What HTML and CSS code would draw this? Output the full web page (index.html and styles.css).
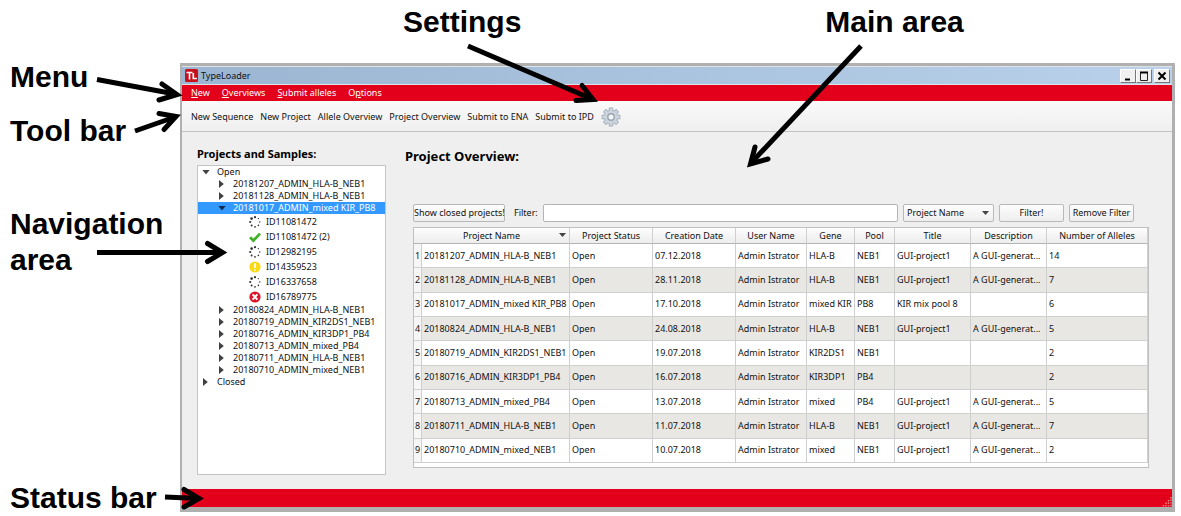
FILE: index.html
```html
<!DOCTYPE html>
<html lang="en">
<head>
<meta charset="utf-8">
<title>TypeLoader</title>
<link rel="stylesheet" href="styles.css">
</head>
<body>
<svg class="defs" aria-hidden="true">
  <symbol id="busy" viewBox="0 0 12 12">
    <g fill="#333">
      <circle cx="6" cy="1.2" r="1.1"/><circle cx="2.6" cy="2.6" r="1.3"/><circle cx="1.2" cy="6" r="1.1"/>
      <circle cx="2.6" cy="9.4" r="1"/><circle cx="6" cy="10.8" r=".9"/><circle cx="9.4" cy="9.4" r=".8"/>
      <circle cx="10.8" cy="6" r=".7"/><circle cx="9.4" cy="2.6" r=".7"/>
    </g>
  </symbol>
  <symbol id="done" viewBox="0 0 12 12"><path d="M1 6.2 4.4 9.6 11 2.6" fill="none" stroke="#43b02a" stroke-width="2.8"/></symbol>
  <symbol id="warn" viewBox="0 0 12 12"><circle cx="6" cy="6" r="5.6" fill="#fbd913"/><path d="M6 2.2V7M6 8.2V9.8" stroke="#fff" stroke-width="1.7"/></symbol>
  <symbol id="fail" viewBox="0 0 12 12"><circle cx="6" cy="6" r="5.6" fill="#dc1428"/><path d="M3.6 3.4 8.4 8.6M8.4 3.4 3.6 8.6" stroke="#fff" stroke-width="2"/></symbol>
</svg>

<header class="top-labels">
  <span class="label label-settings">Settings</span>
  <span class="label label-main">Main area</span>
</header>
<aside class="side-labels">
  <span class="label label-menu">Menu</span>
  <span class="label label-toolbar">Tool bar</span>
  <span class="label label-nav">Navigation<br>area</span>
  <span class="label label-status">Status bar</span>
</aside>

<div class="window">
  <div class="titlebar">
    <svg class="logo" viewBox="0 0 13 13"><rect width="13" height="13" rx="1.5" fill="#c8101c"/><path d="M1.5 3.5H7.5M4.5 3.5V10.5M8.3 4V9.5H11.8" fill="none" stroke="#fff" stroke-width="1.6"/></svg>
    <span class="title">TypeLoader</span>
    <div class="controls">
      <button class="control" aria-label="Minimize"><svg viewBox="0 0 10 10"><path d="M2 8.5H7" stroke="#000" stroke-width="2"/></svg></button>
      <button class="control" aria-label="Maximize"><svg viewBox="0 0 10 10"><path d="M1.5 1V9.5H8.5V1" fill="none" stroke="#222"/><path d="M1 1.5H9" stroke="#000" stroke-width="2"/></svg></button>
      <button class="control control-close" aria-label="Close"><svg viewBox="0 0 10 10"><path d="M1.5 1.5 8.5 8.5M8.5 1.5 1.5 8.5" stroke="#000" stroke-width="2"/></svg></button>
    </div>
  </div>
  <nav class="menubar">
    <button><u>N</u>ew</button>
    <button><u>O</u>verviews</button>
    <button><u>S</u>ubmit alleles</button>
    <button>O<u>p</u>tions</button>
  </nav>
  <div class="toolbar">
    <button>New Sequence</button>
    <button>New Project</button>
    <button>Allele Overview</button>
    <button>Project Overview</button>
    <button>Submit to ENA</button>
    <button>Submit to IPD</button>
    <button class="gear" aria-label="Settings">
      <svg viewBox="0 0 20 20">
        <g stroke="#a4b0bd" stroke-width="4.4"><path d="M10 .6V19.4M.6 10H19.4M3.4 3.4 16.6 16.6M16.6 3.4 3.4 16.6"/></g>
        <circle cx="10" cy="10" r="7.2" fill="#a4b0bd"/>
        <g stroke="#cfd7df" stroke-width="2.6"><path d="M10 1.4V18.6M1.4 10H18.6M4 4 16 16M16 4 4 16"/></g>
        <circle cx="10" cy="10" r="6.3" fill="#cbd4dd"/>
        <circle cx="10" cy="10" r="3.2" fill="#f4f4f4" stroke="#98a5b3" stroke-width="1.4"/>
      </svg>
    </button>
  </div>

  <div class="content">
    <section class="navigation">
      <h2>Projects and Samples:</h2>
      <ul class="tree">
        <li><div class="node expanded">Open</div>
          <ul>
            <li><div class="node">20181207_ADMIN_HLA-B_NEB1</div></li>
            <li><div class="node">20181128_ADMIN_HLA-B_NEB1</div></li>
            <li><div class="node expanded selected">20181017_ADMIN_mixed KIR_PB8</div>
              <ul class="samples">
                <li><svg><use href="#busy"/></svg>ID11081472</li>
                <li><svg><use href="#done"/></svg>ID11081472 (2)</li>
                <li><svg><use href="#busy"/></svg>ID12982195</li>
                <li><svg><use href="#warn"/></svg>ID14359523</li>
                <li><svg><use href="#busy"/></svg>ID16337658</li>
                <li><svg><use href="#fail"/></svg>ID16789775</li>
              </ul>
            </li>
            <li><div class="node">20180824_ADMIN_HLA-B_NEB1</div></li>
            <li><div class="node">20180719_ADMIN_KIR2DS1_NEB1</div></li>
            <li><div class="node">20180716_ADMIN_KIR3DP1_PB4</div></li>
            <li><div class="node">20180713_ADMIN_mixed_PB4</div></li>
            <li><div class="node">20180711_ADMIN_HLA-B_NEB1</div></li>
            <li><div class="node">20180710_ADMIN_mixed_NEB1</div></li>
          </ul>
        </li>
        <li><div class="node">Closed</div></li>
      </ul>
    </section>

    <main class="overview">
      <h1>Project Overview:</h1>
      <div class="filters">
        <button class="btn btn-show">Show closed projects!</button>
        <label for="filter">Filter:</label>
        <input id="filter" type="text">
        <div class="picker">
          <select class="btn" aria-label="Filter column"><option>Project Name</option></select>
        </div>
        <button class="btn btn-filter">Filter!</button>
        <button class="btn btn-filter">Remove Filter</button>
      </div>
      <div class="table-frame">
        <table>
          <colgroup><col class="c-num"><col class="c-name"><col class="c-wide"><col class="c-wide"><col class="c-user"><col class="c-gene"><col class="c-pool"><col class="c-text"><col class="c-text"><col></colgroup>
          <thead><tr><th class="sorted" colspan="2">Project Name</th><th>Project Status</th><th>Creation Date</th><th>User Name</th><th>Gene</th><th>Pool</th><th>Title</th><th>Description</th><th>Number of Alleles</th></tr></thead>
          <tbody>
            <tr><th>1</th><td>20181207_ADMIN_HLA-B_NEB1</td><td>Open</td><td>07.12.2018</td><td>Admin Istrator</td><td>HLA-B</td><td>NEB1</td><td>GUI-project1</td><td>A GUI-generat...</td><td>14</td></tr>
            <tr><th>2</th><td>20181128_ADMIN_HLA-B_NEB1</td><td>Open</td><td>28.11.2018</td><td>Admin Istrator</td><td>HLA-B</td><td>NEB1</td><td>GUI-project1</td><td>A GUI-generat...</td><td>7</td></tr>
            <tr><th>3</th><td>20181017_ADMIN_mixed KIR_PB8</td><td>Open</td><td>17.10.2018</td><td>Admin Istrator</td><td>mixed KIR</td><td>PB8</td><td>KIR mix pool 8</td><td></td><td>6</td></tr>
            <tr><th>4</th><td>20180824_ADMIN_HLA-B_NEB1</td><td>Open</td><td>24.08.2018</td><td>Admin Istrator</td><td>HLA-B</td><td>NEB1</td><td>GUI-project1</td><td>A GUI-generat...</td><td>5</td></tr>
            <tr><th>5</th><td>20180719_ADMIN_KIR2DS1_NEB1</td><td>Open</td><td>19.07.2018</td><td>Admin Istrator</td><td>KIR2DS1</td><td>NEB1</td><td></td><td></td><td>2</td></tr>
            <tr><th>6</th><td>20180716_ADMIN_KIR3DP1_PB4</td><td>Open</td><td>16.07.2018</td><td>Admin Istrator</td><td>KIR3DP1</td><td>PB4</td><td></td><td></td><td>2</td></tr>
            <tr><th>7</th><td>20180713_ADMIN_mixed_PB4</td><td>Open</td><td>13.07.2018</td><td>Admin Istrator</td><td>mixed</td><td>PB4</td><td>GUI-project1</td><td>A GUI-generat...</td><td>5</td></tr>
            <tr><th>8</th><td>20180711_ADMIN_HLA-B_NEB1</td><td>Open</td><td>11.07.2018</td><td>Admin Istrator</td><td>HLA-B</td><td>NEB1</td><td>GUI-project1</td><td>A GUI-generat...</td><td>7</td></tr>
            <tr><th>9</th><td>20180710_ADMIN_mixed_NEB1</td><td>Open</td><td>10.07.2018</td><td>Admin Istrator</td><td>mixed</td><td>NEB1</td><td>GUI-project1</td><td>A GUI-generat...</td><td>2</td></tr>
          </tbody>
        </table>
      </div>
    </main>
  </div>
  <footer class="statusbar">
    <svg class="grip" viewBox="0 0 10 10"><path d="M9 0V10M6.5 3V10M4 5.5V10M1.5 8V10" stroke="#e88" stroke-width="1.4" stroke-dasharray="1.4 1.2"/></svg>
  </footer>
</div>

<svg class="arrows" aria-hidden="true">
  <g fill="none" stroke="#000" stroke-width="5" stroke-linecap="round" stroke-miterlimit="8">
    <g stroke-linecap="butt">
      <path d="M97 79.500 175 94M135 131 175 117M468 46 592 99M861 46 751 163M97 252.500H223M165 497 199 498.500"/>
    </g>
    <path d="M162 84 177 94.500 159 100"/>
    <path d="M159 113.500 176 116.500 164 129.500"/>
    <path d="M582 85.500 593 99.500 576 100.500"/>
    <path d="M755 147 750.500 164 768 159"/>
    <path d="M207.500 243.500 222.500 252.500 207.500 261.500"/>
    <path d="M184 489.500 199 498.500 184 507"/>
  </g>
</svg>
</body>
</html>
```
FILE: styles.css
```css
* { box-sizing: border-box; }

body {
  margin: 0;
  position: relative;
  min-height: 100vh;
  display: grid;
  grid-template-columns: 180px minmax(0, 1fr);
  grid-template-rows: 63px 1fr;
  background: #fff;
  color: #111;
  font: 9px/12px "Noto Sans", "Open Sans", sans-serif;
}

button, input, select { font: inherit; color: inherit; }
button { padding: 0; border: 0; background: none; white-space: nowrap; }
ul { margin: 0; padding: 0; list-style: none; }
h1, h2 { margin: 0; color: #000; }
.defs { position: absolute; width: 0; height: 0; }

/* Callouts */
.label { font: bold 30px/36px "Liberation Sans", Arial, sans-serif; color: #000; white-space: nowrap; }
.top-labels { grid-column: 2; display: flex; gap: 304px; padding: 4px 0 0 223px; }
.side-labels { grid-column: 1; grid-row: 1 / 3; display: flex; flex-direction: column; padding: 59px 0 0 10px; }
.label-toolbar { margin-top: 18px; }
.label-nav { margin-top: 57px; }
.label-status { margin-top: auto; }
.arrows { position: absolute; top: 0; left: 0; width: 100%; height: 100%; pointer-events: none; }

/* Window */
.window {
  grid-column: 2;
  grid-row: 2;
  display: flex;
  flex-direction: column;
  margin: 0 6px 4px 0;
  border: solid #b0b0b0;
  border-width: 3px 3px 5px 2px;
  background: #efefef;
}
.titlebar {
  display: flex;
  align-items: center;
  height: 19px;
  padding: 0 2px 0 3px;
  border: solid #dfe3e6;
  border-width: 1px 0;
  background: linear-gradient(90deg, #9bb5d2, #b9d1ea);
}
.logo { width: 13px; height: 13px; }
.title { margin-left: 3px; }
.controls { display: flex; margin-left: auto; }
.control {
  width: 16px;
  height: 14px;
  display: grid;
  place-items: center;
  background: #f0f0f0;
  border: solid 1px;
  border-color: #fff #777 #777 #fff;
}
.control svg { width: 10px; height: 10px; }
.control-close { margin-left: 2px; }

.menubar { display: flex; gap: 12px; height: 16px; padding: 0 9px; background: #e2001a; color: #fff; }
.toolbar {
  display: flex;
  align-items: center;
  gap: 7px;
  height: 31px;
  padding: 2px 9px 0;
  border-bottom: 1px solid #c3c3c3;
  background: linear-gradient(#fafafa, #efefef);
}
.gear { width: 20px; height: 20px; }
.gear svg { display: block; width: 20px; height: 20px; }

.content { flex: 1; display: flex; gap: 19px; padding: 15px 23px 14px 15px; }

/* Tree */
.navigation { flex: 0 0 189px; display: flex; flex-direction: column; gap: 4px; }
.navigation h2 { font-size: 11px; line-height: 14px; }
.tree { flex: 1; border: 1px solid #c4c4c4; background: #fff; }
.node { display: flex; align-items: center; height: 12px; padding-left: 4px; white-space: nowrap; }
.tree > li > ul .node { padding-left: 20px; }
.node::before {
  content: "";
  width: 6px;
  height: 8px;
  margin: 0 8px 0 1px;
  background: #404040;
  clip-path: polygon(0 0, 80% 50%, 0 100%);
}
.node.expanded::before { width: 8px; height: 5px; margin: 0 7px 0 0; clip-path: polygon(0 0, 100% 0, 50% 100%); }
.node.selected { background: #3399ff; color: #fff; }
.node.selected::before { background: #102a50; }
.samples li { display: flex; align-items: center; gap: 5px; height: 15px; padding-left: 51px; white-space: nowrap; }
.samples svg { width: 12px; height: 12px; }

/* Overview */
.overview { flex: 1; min-width: 0; display: flex; flex-direction: column; padding-bottom: 7px; }
.overview h1 { font-size: 13px; line-height: 18px; }
.filters { display: flex; align-items: center; gap: 5px; margin: 39px 15px 5px 8px; }
.filters label { margin: 0 0 0 4px; }
.filters input { flex: 1; min-width: 0; height: 18px; border: 1px solid #b4b4b4; border-radius: 2px; background: #fff; }
.btn {
  height: 18px;
  border: 1px solid #b8b8b8;
  border-radius: 2px;
  background: linear-gradient(#fdfdfd, #eee);
}
.btn-show { width: 92px; }
.btn-filter { width: 65px; }
.picker { position: relative; display: flex; width: 91px; }
.picker .btn { width: 100%; padding: 0 3px; appearance: none; }

.table-frame { flex: 1; margin-left: 8px; padding-bottom: 4px; border: 1px solid #c0c0c0; background: #fff; }
table { width: 100%; height: 100%; table-layout: fixed; border-collapse: separate; border-spacing: 0; }
th, td { padding: 0; border: solid #cfcfcf; border-width: 0 1px 1px 0; white-space: nowrap; overflow: hidden; }
td { padding-left: 2px; text-align: left; }
th { font-weight: normal; background: #f6f6f6; }
thead th { position: relative; height: 16px; background: linear-gradient(#fdfdfd, #ededed); border-bottom-color: #b4b4b4; }
tbody tr:nth-child(even) td { background: #e9e7e3; }
.c-num { width: 8px; }
.c-name { width: 148px; }
.c-wide { width: 83px; }
.c-user { width: 71px; }
.c-gene { width: 48px; }
.c-pool { width: 40px; }
.c-text { width: 76px; }
.sorted::after,
.picker::after {
  content: "";
  position: absolute;
  top: 5px;
  right: 3px;
  width: 7px;
  height: 4px;
  background: #444;
  clip-path: polygon(0 0, 100% 0, 50% 100%);
}
.picker::after { top: 7px; right: 5px; pointer-events: none; }

.statusbar { display: flex; justify-content: flex-end; align-items: flex-end; height: 18px; background: #e2001a; }
.grip { width: 10px; height: 10px; }
```
